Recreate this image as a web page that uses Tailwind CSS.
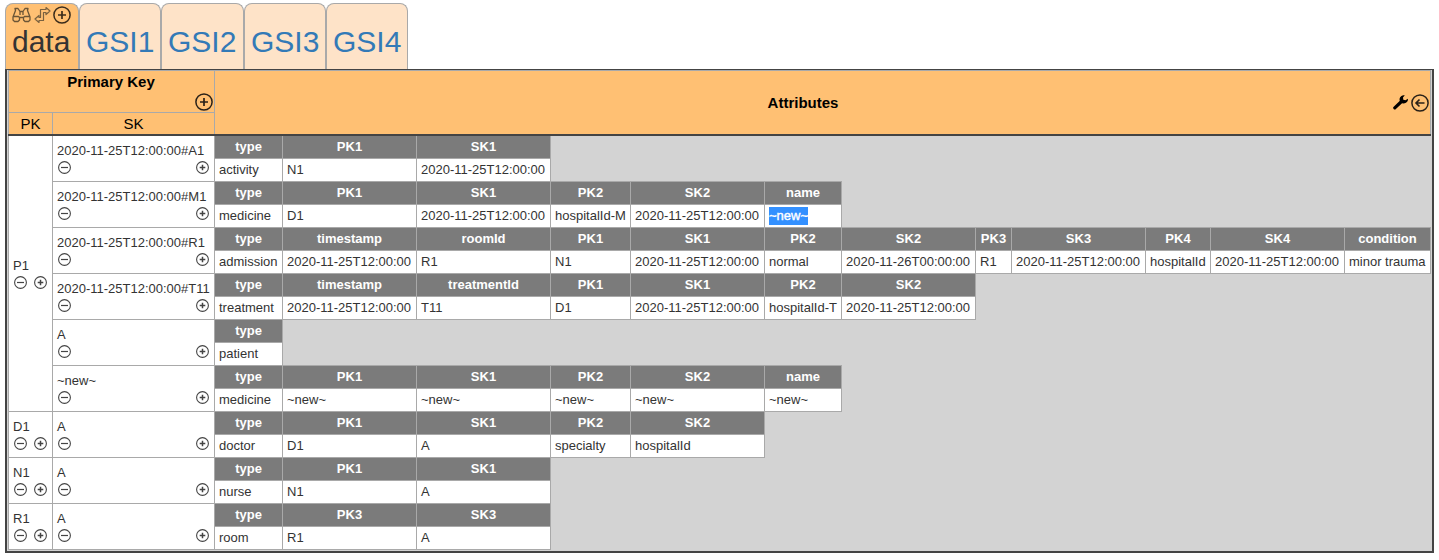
<!DOCTYPE html>
<html lang="en">
<head>
<meta charset="utf-8">
<title>Data model</title>
<script src="https://cdn.jsdelivr.net/npm/@tailwindcss/browser@4"></script>
</head>
<body class="bg-white font-['Liberation_Sans',Arial,sans-serif] text-[#333]">
<svg class="hidden">
  <symbol id="plus" viewBox="0 0 18 18"><g fill="none" stroke="currentColor"><circle cx="9" cy="9" r="8.1" stroke-width="1.5"/><path d="M9 5v8M5 9h8" stroke-width="1.7"/></g></symbol>
  <symbol id="back" viewBox="0 0 18 18"><g fill="none" stroke="currentColor"><circle cx="9" cy="9" r="8.1" stroke-width="1.5"/><path d="M13.5 9H5M8.5 5.5L5 9l3.5 3.5" stroke-width="1.6"/></g></symbol>
  <symbol id="plus-sm" viewBox="0 0 14 14"><g fill="none" stroke="currentColor"><circle cx="7.500" cy="7.500" r="5.900" stroke-width="1.1"/><path d="M7.500 4.700v5.600M4.700 7.500h5.600" stroke-width="1.5"/></g></symbol>
  <symbol id="minus-sm" viewBox="0 0 14 14"><g fill="none" stroke="currentColor"><circle cx="7.500" cy="7.500" r="5.900" stroke-width="1.1"/><path d="M4 7.500h7" stroke-width="1.2"/></g></symbol>
</svg>

<main class="ml-[5px] w-[1429px] pt-[3px]">
  <nav class="flex h-[66px] text-[30px] leading-[34px]">
    <div class="w-[74px] rounded-t-lg border border-b-0 border-[#a9a9a9] bg-[#ffc073] pl-1.5 pt-px">
      <div class="flex h-[20px] items-center gap-[2px] text-[#3b2c1b]">
        <svg class="h-[16px] w-[19px]" viewBox="0 0 19 16" fill="none" stroke="#6b5536" stroke-width="1.3" stroke-linejoin="round"><path d="M1 10L3.500 3.500L3 1.500H6L8 4.500H11L13 1.500H16L15.500 3.500L18 10V13L16.500 14.500H13L11.500 13V10.500H7.500V13L6 14.500H2.500L1 13ZM1.500 9.500H6.500L7.500 10.500M17.500 9.500H12.500L11.500 10.500M8 4.500V8M11 4.500V8"/></svg>
        <svg class="ml-px h-[18px] w-[17px]" viewBox="0 0 17 18" fill="none" stroke="#7a613f" stroke-width="1.200" stroke-linejoin="round"><path d="M12 1.500L16 5L12 8.500V6.500H9.500V14.500H5V16.500L1 13L5 9.500V11.500H6.500V3.500H12Z"/></svg>
        <svg class="size-[18px]"><use href="#plus"/></svg>
      </div>
      <div>data</div>
    </div>
    <div class="w-[82px] rounded-t-lg border border-b-0 border-[#a9a9a9] bg-[#fee3c8] pl-1.5 pt-[21px] text-[#337ab7]">GSI1</div>
    <div class="w-[83px] rounded-t-lg border border-b-0 border-[#a9a9a9] bg-[#fee3c8] pl-1.5 pt-[21px] text-[#337ab7]">GSI2</div>
    <div class="w-[82px] rounded-t-lg border border-b-0 border-[#a9a9a9] bg-[#fee3c8] pl-1.5 pt-[21px] text-[#337ab7]">GSI3</div>
    <div class="w-[82px] rounded-t-lg border border-b-0 border-[#a9a9a9] bg-[#fee3c8] pl-1.5 pt-[21px] text-[#337ab7]">GSI4</div>
  </nav>

  <section class="h-[484px] border-2 border-t border-[#444] bg-[#d3d3d3] px-px">
    <header class="flex h-[66px] border-b-2 border-[#444]">
      <div class="flex h-[64px] w-full border border-b-0 border-[#a9a9a9] bg-[#ffc073] text-black">
        <div class="w-[206px] border-r border-[#a9a9a9]">
          <div class="h-[42px] border-b border-[#a9a9a9]">
            <div class="h-[22px] pr-px text-center text-[15px] leading-[22px] font-bold">Primary Key</div>
            <div class="flex justify-end pr-px text-[#2a2118]"><svg class="size-[18px]"><use href="#plus"/></svg></div>
          </div>
          <div class="flex h-[21px] text-center text-[15px] leading-[22px]">
            <div class="w-[44px] border-r border-[#a9a9a9]">PK</div>
            <div class="flex-1">SK</div>
          </div>
        </div>
        <div class="flex flex-1 items-center">
          <div class="flex-1 pt-0.5 pl-[3px] text-center text-[15px] font-bold">Attributes</div>
          <div class="flex w-[42px] items-center justify-end gap-[3px] pr-px text-[#2a2118]">
            <svg class="size-[15px]" viewBox="0 0 15 15"><path d="M1.800 12.800L9 6" stroke="#000" stroke-width="3.200" stroke-linecap="round"/><path d="M11.800 .3A4.200 4.200 0 1 0 14.900 3.800L12.500 5.300L10.300 4.800L10 2.600Z" fill="#000"/></svg>
            <svg class="size-[18px]"><use href="#back"/></svg>
          </div>
        </div>
      </div>
    </header>
    <div id="groups" class="border-l border-[#a9a9a9]"></div>
  </section>
</main>

<script>
const T = '2020-11-25T12:00:00';
const N = '~new~';
const widths = [68, 134, 134, 80, 134, 77, 134, 36, 134, 65, 134, 86];
const groups = [
  ['P1', [
    [T + '#A1', [['type', 'activity'], ['PK1', 'N1'], ['SK1', T]]],
    [T + '#M1', [['type', 'medicine'], ['PK1', 'D1'], ['SK1', T], ['PK2', 'hospitalId-M'], ['SK2', T], ['name', N, true]]],
    [T + '#R1', [['type', 'admission'], ['timestamp', T], ['roomId', 'R1'], ['PK1', 'N1'], ['SK1', T], ['PK2', 'normal'], ['SK2', '2020-11-26T00:00:00'], ['PK3', 'R1'], ['SK3', T], ['PK4', 'hospitalId'], ['SK4', T], ['condition', 'minor trauma']]],
    [T + '#T11', [['type', 'treatment'], ['timestamp', T], ['treatmentId', 'T11'], ['PK1', 'D1'], ['SK1', T], ['PK2', 'hospitalId-T'], ['SK2', T]]],
    ['A', [['type', 'patient']]],
    [N, [['type', 'medicine'], ['PK1', N], ['SK1', N], ['PK2', N], ['SK2', N], ['name', N]]],
  ]],
  ['D1', [['A', [['type', 'doctor'], ['PK1', 'D1'], ['SK1', 'A'], ['PK2', 'specialty'], ['SK2', 'hospitalId']]]]],
  ['N1', [['A', [['type', 'nurse'], ['PK1', 'N1'], ['SK1', 'A']]]]],
  ['R1', [['A', [['type', 'room'], ['PK3', 'R1'], ['SK3', 'A']]]]],
];
const icon = id => `<svg class="size-[14px] overflow-visible"><use href="#${id}"/></svg>`;
const cell = ([name, value, selected], i) => `
  <div class="border-r border-[#a9a9a9]" style="width:${widths[i]}px">
    <div class="h-[23px] border-b border-[#a9a9a9] bg-[#7b7b7b] text-center text-[13px] leading-[21px] font-bold text-white">${name}</div>
    <div class="h-[23px] border-b border-[#a9a9a9] bg-white pl-1 text-[13px] leading-[22px] whitespace-nowrap">${selected ? `<span class="inline-block h-[18px] bg-[#3390ff] leading-[18px] text-white [-webkit-text-stroke:0.4px_white]">${value}</span>` : value}</div>
  </div>`;
const item = ([sk, attrs]) => `
  <div class="flex h-[46px]">
    <div class="w-[162px] border-r border-b border-[#a9a9a9] bg-white pt-[5px] pr-[5px] pl-1 text-[13px] leading-[19px]">
      <div class="whitespace-nowrap">${sk}</div>
      <div class="flex justify-between text-[#444]">${icon('minus-sm')}${icon('plus-sm')}</div>
    </div>
    <div class="flex ${sk.endsWith('#A1') ? '' : '-mt-px h-[47px] border-t border-[#a9a9a9]'}">${attrs.map(cell).join('')}</div>
  </div>`;
document.getElementById('groups').innerHTML = groups.map(([pk, items]) => `
  <div class="flex">
    <div class="flex w-[44px] flex-col justify-center border-r border-b border-[#a9a9a9] bg-white pl-1 text-[13px] leading-[19px]">
      <div class="pt-px">${pk}</div>
      <div class="flex gap-1.5 pb-1 text-[#444]">${icon('minus-sm')}${icon('plus-sm')}</div>
    </div>
    <div>${items.map(item).join('')}</div>
  </div>`).join('');
</script>
</body>
</html>
